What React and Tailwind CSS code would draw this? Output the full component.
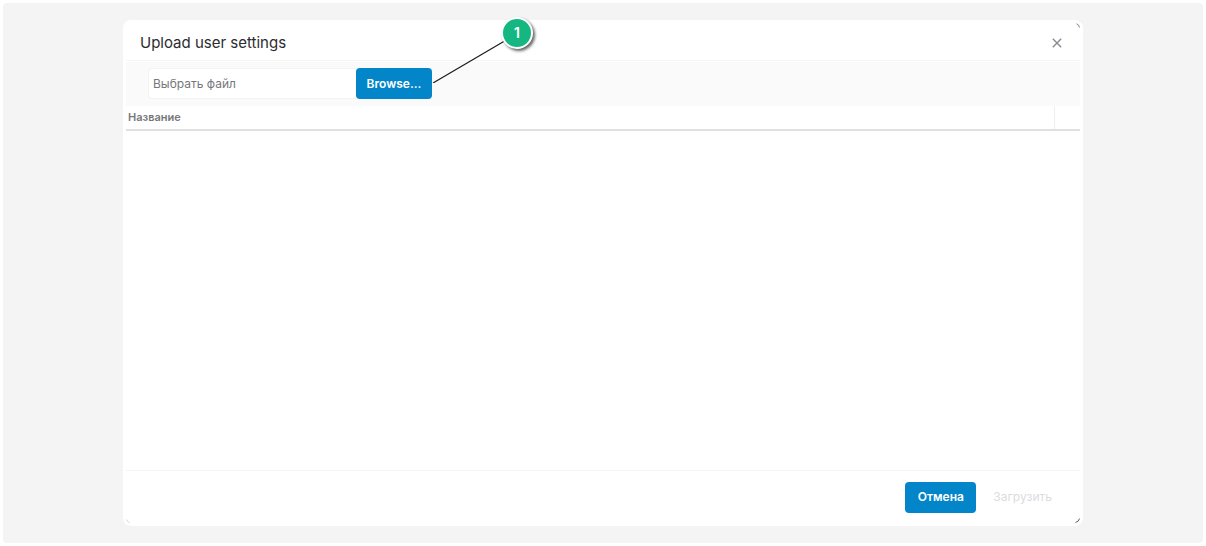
import React, { useRef, useState } from 'react';

function CloseIcon() {
  return (
    <svg width="10" height="10" viewBox="0 0 10 10" fill="none" stroke="#8a8a92" strokeWidth="1.4" aria-hidden="true">
      <path d="M0.8 0.8 L9.2 9.2 M9.2 0.8 L0.8 9.2" />
    </svg>
  );
}

function Callout() {
  return (
    <div className="absolute left-full bottom-4 w-[101px] h-[66px] pointer-events-none">
      <svg className="absolute inset-0" width="101" height="66" viewBox="0 0 101 66" fill="none">
        <path d="M1 66 L76 22" stroke="#1c1c1c" strokeWidth="1.2" />
      </svg>
      <span className="absolute right-0 top-0 flex size-8 items-center justify-center rounded-full border-2 border-white bg-[#14b782] text-sm font-semibold text-white shadow-[2px_2px_3px_rgba(0,0,0,0.6)]">
        1
      </span>
    </div>
  );
}

export default function App() {
  const [fileName, setFileName] = useState('');
  const picker = useRef(null);

  return (
    <div className="bg-white p-[3px] font-['Inter','Liberation_Sans',sans-serif]">
      <div className="rounded bg-[#f4f4f4] py-[17px]">
        <section
          role="dialog"
          aria-labelledby="dialog-title"
          className="relative mx-auto w-4/5 rounded-lg border-3 border-white bg-white"
        >
          <header className="flex h-[38px] items-center justify-between border-b border-[#f4f4f4] pl-[14px] pr-[18px] pt-[3px]">
            <h1 id="dialog-title" className="text-[15px] text-[#2c2c30]">Upload user settings</h1>
            <button type="button" aria-label="Close" className="flex size-[10px] items-center justify-center">
              <CloseIcon />
            </button>
          </header>

          <div className="mt-px flex h-11 items-start bg-[#fafafa] pl-[22px] pt-[6px]">
            <input
              type="text"
              readOnly
              aria-label="Выбрать файл"
              placeholder="Выбрать файл"
              value={fileName}
              className="h-[31px] w-[208px] rounded-l border border-r-0 border-[#f3f3f3] bg-white px-1 text-xs text-[#333333] placeholder:text-[#77777b] outline-none"
            />
            <div className="relative">
              <button
                type="button"
                onClick={() => picker.current.click()}
                className="block h-[31px] w-[76px] rounded bg-[#0285c9] text-xs font-semibold text-white"
              >
                Browse...
              </button>
              <Callout />
            </div>
            <input
              ref={picker}
              type="file"
              className="hidden"
              onChange={(e) => setFileName(e.target.files[0]?.name || '')}
            />
          </div>

          <div className="min-h-[364px]">
            <table className="w-full table-fixed border-collapse">
              <thead>
                <tr className="h-6 border-b-2 border-[#e0e0e1]">
                  <th scope="col" className="px-[2px] text-left text-[11px] font-semibold text-[#77777b]">Название</th>
                  <td className="w-[26px] border-l border-[#eeeeee]"></td>
                </tr>
              </thead>
            </table>
          </div>

          <footer className="flex h-[53px] items-center justify-end gap-[17px] border-t border-[#f5f5f5] pr-7">
            <button type="button" className="h-[31px] w-[71px] rounded bg-[#0285c9] text-xs font-semibold text-white">
              Отмена
            </button>
            <button type="button" disabled={!fileName} className="text-xs text-[#333333] disabled:text-[#dcdcdf]">
              Загрузить
            </button>
          </footer>

          {/* resize handles */}
          <svg className="absolute right-0 top-0" width="4" height="5" viewBox="0 0 4 5" fill="none" stroke="#8a8a8a">
            <path d="M0.5 0.8 Q3 1.2 3.5 4.5" />
          </svg>
          <svg className="absolute right-0 bottom-0" width="5" height="5" viewBox="0 0 5 5" fill="none" stroke="#5c5c5c">
            <path d="M4.5 0.5 Q4 3.5 0.5 4.5" />
          </svg>
          <svg className="absolute left-0 bottom-0" width="4" height="4" viewBox="0 0 4 4" fill="none" stroke="#d8d8d8">
            <path d="M0.5 0.5 Q1 3 3.5 3.5" />
          </svg>
        </section>
      </div>
    </div>
  );
}
